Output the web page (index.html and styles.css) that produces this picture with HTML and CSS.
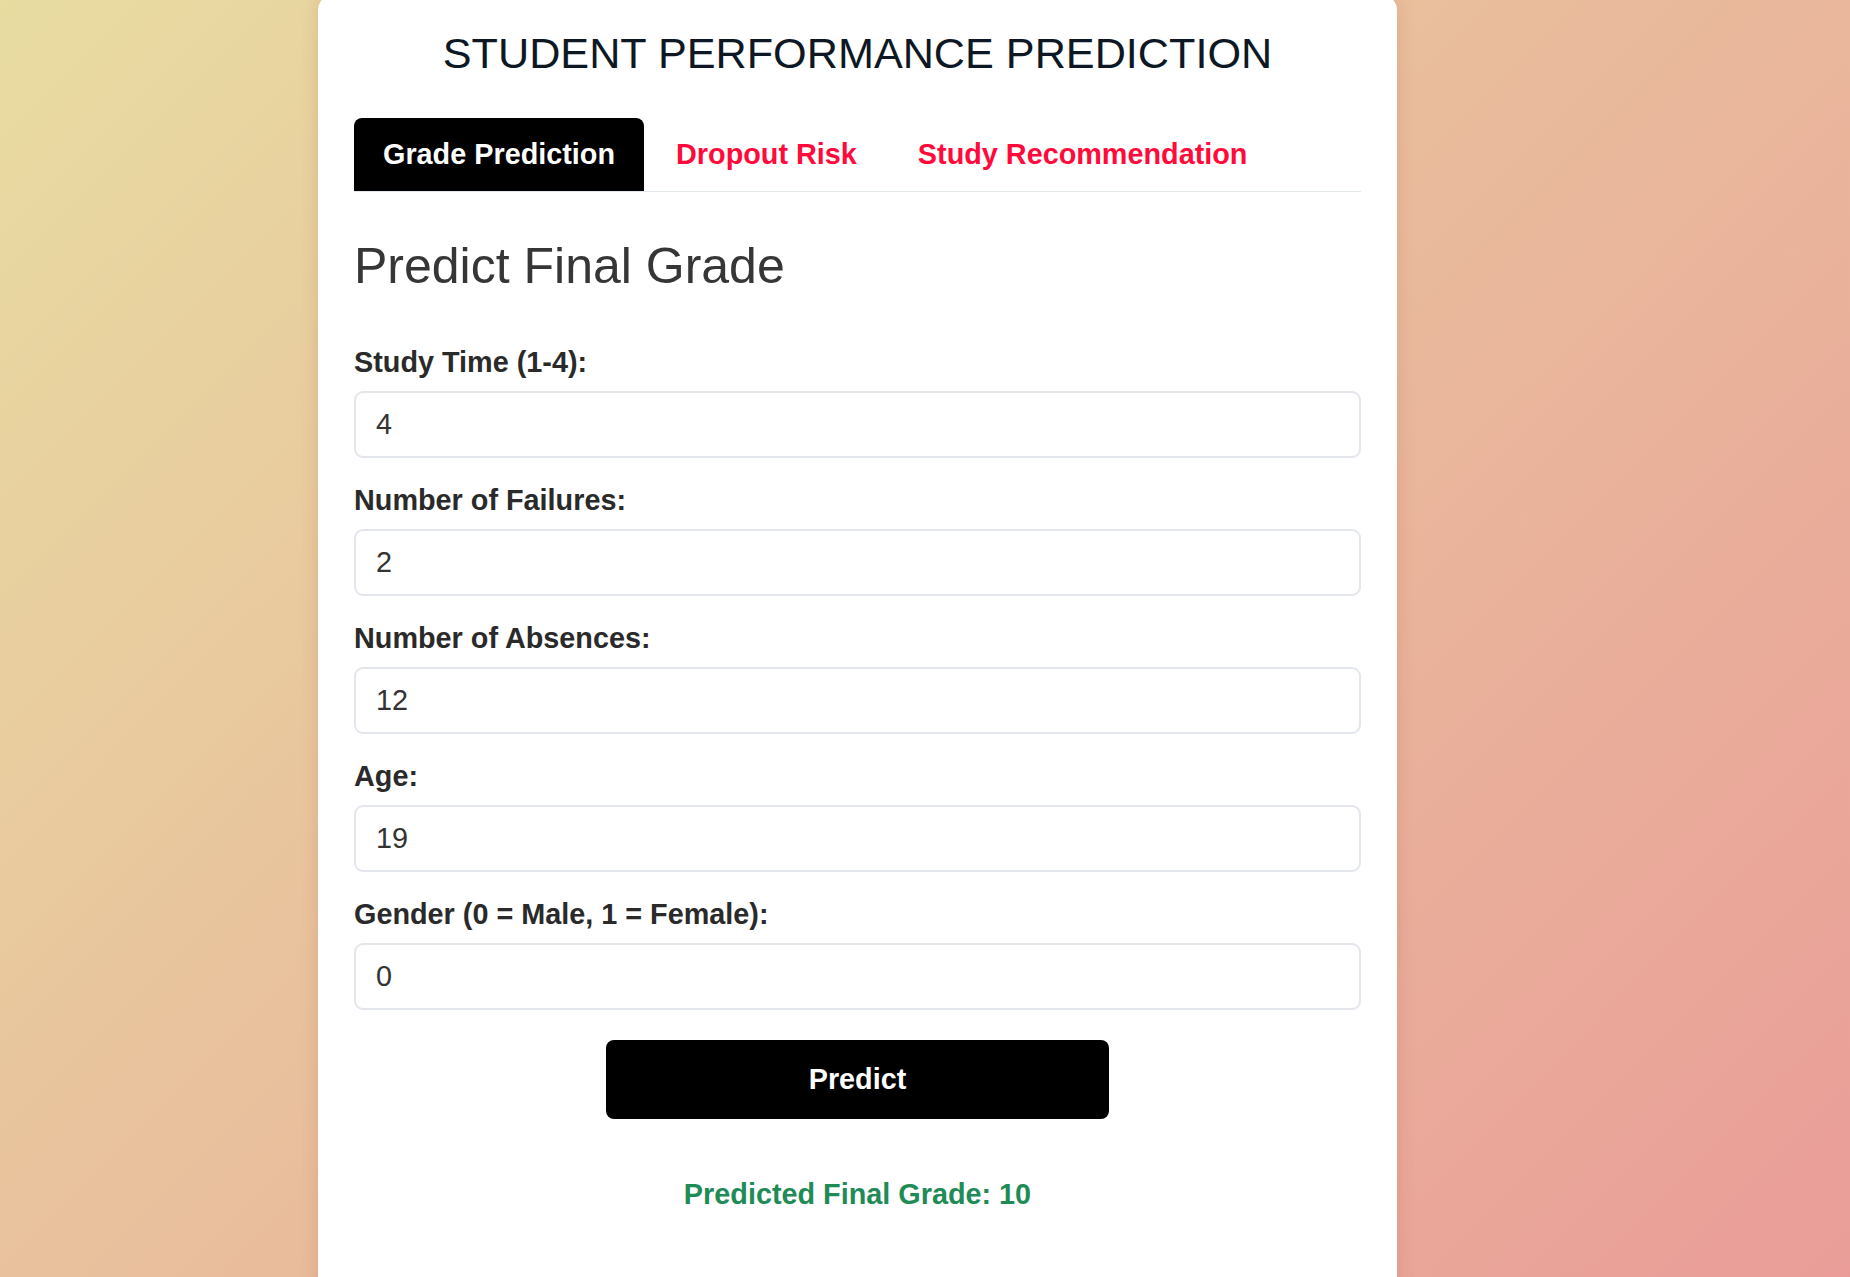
FILE: index.html
```html
<!DOCTYPE html>
<html lang="en">
<head>
<meta charset="utf-8">
<title>Student Performance Prediction</title>
<link rel="stylesheet" href="styles.css">
</head>
<body>
  <main class="card">
    <h1 class="title">STUDENT PERFORMANCE PREDICTION</h1>
    <nav class="tabs">
      <button class="tab tab-active">Grade Prediction</button>
      <button class="tab">Dropout Risk</button>
      <button class="tab">Study Recommendation</button>
    </nav>
    <h2 class="section-title">Predict Final Grade</h2>
    <form class="form">
      <div class="field">
        <label class="label">Study Time (1-4):</label>
        <input class="input" type="text" value="4">
      </div>
      <div class="field">
        <label class="label">Number of Failures:</label>
        <input class="input" type="text" value="2">
      </div>
      <div class="field">
        <label class="label">Number of Absences:</label>
        <input class="input" type="text" value="12">
      </div>
      <div class="field">
        <label class="label">Age:</label>
        <input class="input" type="text" value="19">
      </div>
      <div class="field">
        <label class="label">Gender (0 = Male, 1 = Female):</label>
        <input class="input" type="text" value="0">
      </div>
      <button type="button" class="predict-btn">Predict</button>
    </form>
    <p class="result">Predicted Final Grade: 10</p>
  </main>
</body>
</html>
```

FILE: styles.css
```css
html, body {
  margin: 0;
  padding: 0;
}

body {
  height: 100vh;
  overflow: hidden;
  background: linear-gradient(135deg, #e8dca1 0%, #e9bc9c 50%, #ea9d98 100%);
  font-family: "Liberation Sans", Arial, sans-serif;
}

.card {
  box-sizing: border-box;
  width: 1079px;
  min-height: 1320px;
  margin: -5px 0 0 318px;
  padding: 34px 36px 40px;
  background: #ffffff;
  border-radius: 15px;
  box-shadow: 0 0 18px rgba(150, 80, 60, 0.18);
}

.title {
  margin: 0 0 40px;
  font-size: 43.2px;
  font-weight: normal;
  line-height: normal;
  text-align: center;
  color: #0e1824;
}

.tabs {
  display: flex;
  gap: 3px;
  border-bottom: 1px solid #e2e7ee;
}

.tab {
  padding: 20px 29px;
  border: none;
  border-radius: 8px 8px 0 0;
  background: transparent;
  font-family: "Liberation Sans", Arial, sans-serif;
  font-size: 28.8px;
  font-weight: bold;
  line-height: normal;
  color: #ff0a3a;
  cursor: pointer;
}

.tab-active {
  background: #000000;
  color: #ffffff;
}

.section-title {
  margin: 45px 0 51px;
  font-size: 50px;
  font-weight: normal;
  line-height: normal;
  color: #363636;
}

.field {
  margin-bottom: 26px;
}

.label {
  display: block;
  margin-bottom: 12px;
  font-size: 28.8px;
  font-weight: bold;
  line-height: normal;
  color: #2a2a2a;
}

.input {
  display: block;
  box-sizing: border-box;
  width: 100%;
  height: 67px;
  padding: 0 20px;
  border: 2px solid #e3e6ec;
  border-radius: 9px;
  background: #ffffff;
  font-family: "Liberation Sans", Arial, sans-serif;
  font-size: 28.8px;
  color: #333333;
  outline: none;
}

.predict-btn {
  display: block;
  width: 50%;
  height: 79px;
  margin: 30px auto 0;
  border: none;
  border-radius: 8px;
  background: #000000;
  color: #ffffff;
  font-family: "Liberation Sans", Arial, sans-serif;
  font-size: 28.8px;
  font-weight: bold;
  cursor: pointer;
}

.result {
  margin: 59px 0 0;
  text-align: center;
  font-size: 28.8px;
  font-weight: bold;
  line-height: normal;
  color: #1f8b56;
}
```
